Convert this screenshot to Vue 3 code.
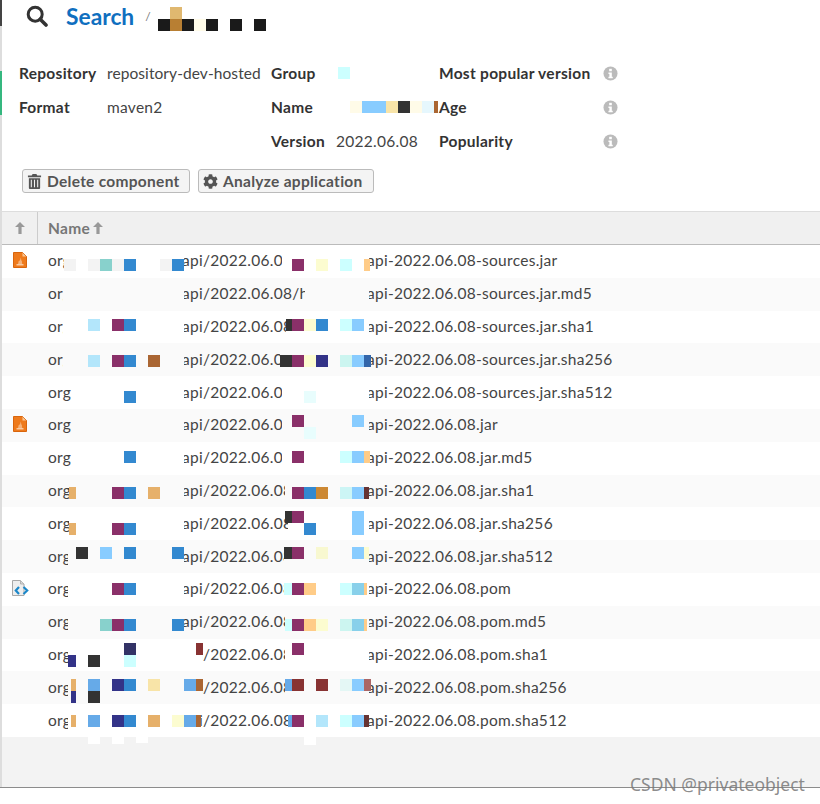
<template>
  <div class="page">
    <div class="main">
      <aside class="strip">
        <i class="strip__dark"></i>
        <i class="strip__gap"></i>
        <i class="strip__green"></i>
      </aside>

      <section class="content">
        <header class="crumbs">
          <svg class="crumbs__icon" viewBox="0 0 22 22">
            <circle cx="9.2" cy="9.2" r="7" fill="none" stroke="#333" stroke-width="3" />
            <path d="M14.2 14.2 20 20" stroke="#333" stroke-width="3.6" stroke-linecap="round" />
          </svg>
          <span class="crumbs__title">Search</span>
          <span class="crumbs__slash">/</span>
          <span class="crumbs__blur">
            <i v-for="(c, i) in titleBlocks" :key="i" :style="{ background: c }"></i>
            <b></b>
          </span>
        </header>

        <div class="info">
          <span class="info__label">Repository</span>
          <span class="info__value info__value--tight">repository-dev-hosted</span>
          <span class="info__label">Group</span>
          <span class="info__value info__value--blur"><i style="background: #ccffff"></i></span>
          <span class="info__label">Most popular version</span>
          <svg class="info__icon" viewBox="0 0 16 16"><circle cx="8" cy="8" r="7.5" fill="#bbb" /><rect x="6.6" y="3" width="2.8" height="2.6" fill="#fff" /><path d="M5.8 7h3.6v4.4h1V13H5.8v-1.6h1V8.6h-1z" fill="#fff" /></svg>

          <span class="info__label">Format</span>
          <span class="info__value">maven2</span>
          <span class="info__label">Name</span>
          <span class="info__value info__value--blur info__value--name">
            <i v-for="(b, i) in nameBlocks" :key="i" :style="{ background: b.c, width: b.w + 'px' }"></i>
          </span>
          <span class="info__label">Age</span>
          <svg class="info__icon" viewBox="0 0 16 16"><circle cx="8" cy="8" r="7.5" fill="#bbb" /><rect x="6.6" y="3" width="2.8" height="2.6" fill="#fff" /><path d="M5.8 7h3.6v4.4h1V13H5.8v-1.6h1V8.6h-1z" fill="#fff" /></svg>

          <span></span>
          <span></span>
          <span class="info__label">Version</span>
          <span class="info__value">2022.06.08</span>
          <span class="info__label">Popularity</span>
          <svg class="info__icon" viewBox="0 0 16 16"><circle cx="8" cy="8" r="7.5" fill="#bbb" /><rect x="6.6" y="3" width="2.8" height="2.6" fill="#fff" /><path d="M5.8 7h3.6v4.4h1V13H5.8v-1.6h1V8.6h-1z" fill="#fff" /></svg>
        </div>

        <div class="actions">
          <button class="btn btn--delete">
            <svg viewBox="0 0 14 16" class="btn__icon">
              <path d="M5 0h4l1 1.6h4v1.8H0V1.6h4zM1 4.4h12V15a1 1 0 0 1-1 1H2a1 1 0 0 1-1-1z" fill="#555" />
              <path d="M3.6 6.2v8M7 6.2v8M10.4 6.2v8" stroke="#f4f4f4" stroke-width="1.1" />
            </svg>
            Delete component
          </button>
          <button class="btn btn--analyze">
            <svg viewBox="0 0 512 512" class="btn__icon">
              <path fill="#555" d="M487.4 315.7l-42.6-24.6c4.3-23.2 4.3-47 0-70.2l42.6-24.6c4.9-2.8 7.1-8.6 5.5-14-11.1-35.6-30-67.8-54.7-94.6-3.8-4.1-10-5.1-14.8-2.3L380.8 110c-17.9-15.4-38.5-27.3-60.8-35.1V25.8c0-5.6-3.9-10.5-9.4-11.7-36.7-8.2-74.3-7.8-109.2 0-5.5 1.2-9.4 6.1-9.4 11.7V75c-22.2 7.9-42.8 19.8-60.8 35.1L88.7 85.5c-4.9-2.8-11-1.9-14.8 2.3-24.7 26.7-43.6 58.9-54.7 94.6-1.7 5.4.6 11.2 5.5 14L67.3 221c-4.3 23.2-4.3 47 0 70.2l-42.6 24.6c-4.9 2.8-7.1 8.6-5.5 14 11.1 35.6 30 67.8 54.7 94.6 3.8 4.1 10 5.1 14.8 2.3l42.6-24.6c17.9 15.4 38.5 27.3 60.8 35.1v49.2c0 5.6 3.9 10.5 9.4 11.7 36.7 8.2 74.3 7.8 109.2 0 5.5-1.2 9.4-6.1 9.4-11.7v-49.2c22.2-7.9 42.8-19.8 60.8-35.1l42.6 24.6c4.9 2.8 11 1.9 14.8-2.3 24.7-26.7 43.6-58.9 54.7-94.6 1.5-5.5-.7-11.3-5.6-14.1zM256 336c-44.1 0-80-35.9-80-80s35.9-80 80-80 80 35.9 80 80-35.9 80-80 80z" />
            </svg>
            Analyze application
          </button>
        </div>

        <div class="thead">
          <div class="thead__sort">
            <svg class="arrow" viewBox="0 0 10 12"><path d="M5 0 10 5H6.6v7H3.4V5H0z" fill="#999" /></svg>
          </div>
          <div class="thead__name">
            Name
            <svg class="arrow" viewBox="0 0 10 12"><path d="M5 0 10 5H6.6v7H3.4V5H0z" fill="#999" /></svg>
          </div>
        </div>

        <div class="tbody">
          <div v-for="(row, i) in rows" :key="row.file" class="row" :class="{ 'row--alt': i % 2 === 1 }">
            <div class="row__icon">
              <svg v-if="row.icon === 'jar'" class="file" viewBox="0 0 14 16">
                <path d="M.5.5h9l4 4v11H.5z" fill="#ee7a1c" stroke="#d9650c" />
                <path d="M9.500.8v3.700h3.700z" fill="#f9c795" />
                <path d="M7.800 5.500 7 8.300 5.600 9.300 5 12.200h4.200L8.900 9.300 8.300 8.300z" fill="#f5b27a" />
                <path d="M3.500 12.200h7v1.200h-7z" fill="#fbdcc0" />
              </svg>
              <svg v-else-if="row.icon === 'pom'" class="file file--pom" viewBox="0 0 17 16">
                <path d="M.5.5h8l3.500 3.500v11.500H.5z" fill="#eee" stroke="#a8a8a8" />
                <path d="M8.500.8V4H12" fill="#d8d8d8" stroke="#a8a8a8" stroke-width=".8" />
                <path d="M7 7 3.800 10.500 7 14M11.500 7l3.700 3.500L11.500 14" fill="none" stroke="#1b87c9" stroke-width="2.200" />
              </svg>
            </div>
            <span class="row__prefix">org</span>
            <span class="row__path">api/2022.06.08/h</span>
            <span class="row__file">{{ row.file }}</span>
          </div>

          <div class="mosaic">
            <i
              v-for="(m, i) in masks"
              :key="'m' + i"
              :style="{ left: m.x + 'px', top: m.y + 'px', width: m.w + 'px', height: m.h + 'px', background: m.c }"
            ></i>
            <i
              v-for="(b, i) in blocks"
              :key="'b' + i"
              :style="{ left: b[0] + 'px', top: b[1] - 245 + 'px', width: (b[3] || 12) + 'px', height: (b[4] || 12) + 'px', background: b[2] }"
            ></i>
          </div>
        </div>

        <div class="tail"></div>
      </section>
    </div>
    <span class="watermark">CSDN @privateobject</span>
  </div>
</template>

<script setup>
const titleBlocks = ['#1a1a1a', '#b87f33', '#1a1a1a', '#fffbe8', '#1a1a1a', '#fff', '#1a1a1a', '#fff', '#1a1a1a']

const nameBlocks = [
  { c: '#fffbe8', w: 12 },
  { c: '#88ccff', w: 24 },
  { c: '#f8e4a8', w: 12 },
  { c: '#333', w: 12 },
  { c: '#fffbe8', w: 12 },
  { c: '#e6f7fd', w: 12 },
  { c: '#aa6633', w: 4 }
]

const names = [
  ['jar', 'api-2022.06.08-sources.jar'],
  ['', 'api-2022.06.08-sources.jar.md5'],
  ['', 'api-2022.06.08-sources.jar.sha1'],
  ['', 'api-2022.06.08-sources.jar.sha256'],
  ['', 'api-2022.06.08-sources.jar.sha512'],
  ['jar', 'api-2022.06.08.jar'],
  ['', 'api-2022.06.08.jar.md5'],
  ['', 'api-2022.06.08.jar.sha1'],
  ['', 'api-2022.06.08.jar.sha256'],
  ['', 'api-2022.06.08.jar.sha512'],
  ['pom', 'api-2022.06.08.pom'],
  ['', 'api-2022.06.08.pom.md5'],
  ['', 'api-2022.06.08.pom.sha1'],
  ['', 'api-2022.06.08.pom.sha256'],
  ['', 'api-2022.06.08.pom.sha512']
]
const rows = names.map(([icon, file]) => ({ icon, file }))

// where the censored stretches of each path start and stop
const ROW_H = 32.8
const maskEdges = [
  [62, 182, 280], [61, 182, 303], [61, 182, 284], [61, 182, 278], [72.5, 182, 280],
  [72.5, 182, 280], [72.5, 182, 280], [67, 182, 283], [67, 182, 286], [66, 182, 282],
  [66, 182, 282], [66, 182, 283], [66, 200, 283], [66, 200, 283], [66, 199, 286]
]
const masks = maskEdges.flatMap(([a, b, c], i) => {
  const bg = i % 2 ? '#fafafa' : '#fff'
  const y = i * ROW_H
  return [
    { x: a, y, w: b - a, h: ROW_H, c: bg },
    { x: c, y, w: 367 - c, h: ROW_H, c: bg }
  ]
})

const PURPLE = '#8a3069'
const BLUE = '#3389d0'
const SKY = '#88ccff'
const ICE = '#ccffff'
const CREAM = '#fcfcd0'
const PEACH = '#ffcc88'
const TAN = '#e6b06a'
const DARK = '#333'
const NAVY = '#333388'
const SOFT = '#66aae8'
const BROWN = '#aa6633'
const RED = '#883333'
const TEAL = '#88d1cc'
const LAKE = '#88d0ea'

const blocks = [
  // x, y on the page, colour, width, height
  [62, 259, '#f3f3f3'], [86, 259, '#f3f3f3'], [110, 259, '#f3f3f3'], [158, 259, '#f3f3f3'],
  [98, 259, TEAL], [122, 259, BLUE], [170, 259, BLUE], [290, 259, PURPLE], [314, 259, CREAM], [338, 259, ICE], [362, 259, PEACH, 6],
  [86, 319, '#b3e6fb'], [110, 319, PURPLE], [122, 319, BLUE], [284, 319, DARK, 6], [290, 319, PURPLE], [302, 319, CREAM], [314, 319, BLUE], [338, 319, ICE], [350, 319, SKY],
  [86, 355, '#b3e6fb'], [110, 355, PURPLE], [122, 355, BLUE], [146, 355, BROWN], [278, 355, DARK], [290, 355, PURPLE], [302, 355, CREAM], [314, 355, NAVY], [338, 355, '#ccf5f0'], [350, 355, SKY], [362, 355, '#3366aa', 7],
  [122, 391, BLUE], [302, 391, '#e8fdfd'],
  [290, 415, PURPLE], [350, 415, SKY], [302, 427, '#e8fdfd'],
  [122, 451, BLUE], [290, 451, PURPLE], [338, 451, ICE], [350, 451, SKY], [362, 451, PEACH, 6],
  [67, 487, TAN, 7], [110, 487, PURPLE], [122, 487, BLUE], [146, 487, TAN], [290, 487, PURPLE], [302, 487, BLUE], [314, 487, '#cc8833'], [338, 487, '#ccf5f5'], [350, 487, SKY], [362, 487, '#663333', 5],
  [67, 523, TAN, 7], [110, 523, PURPLE], [122, 523, BLUE], [283, 511, DARK, 7], [290, 511, PURPLE], [302, 523, BLUE], [350, 511, SKY, 12, 24],
  [74, 547, DARK], [98, 547, SKY], [122, 547, BLUE], [170, 547, BLUE], [282, 547, DARK, 8], [290, 547, PURPLE], [314, 547, '#f8f8d0'], [350, 547, SKY], [362, 547, CREAM, 5],
  [110, 583, PURPLE], [122, 583, BLUE], [282, 583, ICE, 8], [290, 583, PURPLE], [302, 583, PEACH], [338, 583, ICE], [350, 583, LAKE], [362, 583, PEACH, 3],
  [98, 619, TEAL], [110, 619, PURPLE], [122, 619, BLUE], [170, 619, BLUE], [283, 619, ICE, 7], [290, 619, PURPLE], [302, 619, PEACH], [314, 619, CREAM], [338, 619, '#ccf5f0'], [350, 619, LAKE], [362, 619, PEACH, 3],
  [122, 643, '#333366'], [194, 643, RED, 7], [290, 643, PURPLE], [66, 655, NAVY, 8], [86, 655, DARK], [122, 655, ICE],
  [69, 679, TAN, 5], [86, 679, SOFT], [110, 679, NAVY], [122, 679, BLUE], [146, 679, '#f8e4a8'], [182, 679, SOFT], [194, 679, BROWN, 7], [283, 679, SOFT, 7], [290, 679, RED], [314, 679, RED], [338, 679, '#e4f7f5'], [350, 679, SKY], [362, 679, '#aa6666', 7],
  [69, 691, NAVY, 5], [86, 691, DARK],
  [69, 715, TAN, 5], [86, 715, SOFT], [110, 715, NAVY], [122, 715, BLUE], [146, 715, TAN], [170, 715, CREAM], [182, 715, SOFT], [194, 715, BROWN, 5], [286, 715, SOFT, 4], [290, 715, PURPLE], [314, 715, '#b3e6fb'], [338, 715, ICE], [350, 715, SKY], [362, 715, '#663333', 5],
  [86, 737, '#fff', 12, 7], [110, 737, '#fff', 12, 7], [134, 737, '#fff', 12, 6], [302, 737, '#fff', 12, 8]
]
</script>

<style>
body {
  background: #fff;
}
</style>

<style scoped>
.page {
  position: relative;
  height: 804px;
  overflow: hidden;
  background: #fff;
  font-family: Lato, "Open Sans", sans-serif;
  color: #333;
}

.main {
  display: flex;
  height: 787px;
  box-sizing: content-box;
  border-bottom: 1px solid #8c8c8c;
}

.strip {
  display: flex;
  flex-direction: column;
  width: 2px;
  flex: none;
  background: #ddd;
}

.strip i {
  display: block;
}

.strip__dark {
  height: 26px;
  background: #444;
}

.strip__gap {
  height: 45px;
}

.strip__green {
  height: 44px;
  background: #35b77f;
}

.content {
  display: flex;
  flex: 1;
  flex-direction: column;
  min-width: 0;
}

.crumbs {
  display: flex;
  align-items: center;
  height: 32px;
  padding-left: 24px;
}

.crumbs__icon {
  width: 22px;
  height: 22px;
  flex: none;
}

.crumbs__title {
  margin-left: 18px;
  color: #0f6fbf;
  font-size: 22.8px;
  font-weight: 700;
}

.crumbs__slash {
  margin-left: 11px;
  color: #777;
  font-size: 12px;
}

.crumbs__blur {
  position: relative;
  display: flex;
  margin: 7px 0 0 7px;
  padding-top: 12px;
  align-self: flex-start;
}

.crumbs__blur i {
  display: block;
  width: 12px;
  height: 12px;
}

.crumbs__blur b {
  position: absolute;
  left: 12px;
  top: 0;
  width: 12px;
  height: 12px;
  background: #e0b870;
}

.info {
  display: grid;
  grid-template-columns: 88px 164px 65px 103px 164px 15px;
  grid-auto-rows: 34px;
  align-items: center;
  margin-top: 24px;
  padding-left: 17px;
  font-size: 15.5px;
  letter-spacing: 0.28px;
}

.info__label {
  font-weight: 700;
  color: #333;
  white-space: nowrap;
}

.info__value {
  color: #444;
  white-space: nowrap;
}

.info__value--tight {
  letter-spacing: 0.08px;
}

.info__value--blur {
  display: flex;
  height: 12px;
  padding-left: 2px;
}

.info__value--name {
  padding-left: 14px;
}

.info__value--blur i {
  display: block;
  width: 12px;
  height: 12px;
  flex: none;
}

.info__icon {
  width: 15px;
  height: 15px;
}

.actions {
  display: flex;
  gap: 8px;
  margin-top: 11px;
  padding-left: 20px;
}

.btn {
  display: flex;
  align-items: center;
  height: 24px;
  padding: 0 0 0 4px;
  background: #f4f4f4;
  border: 1px solid #bbb;
  border-radius: 3px;
  color: #555;
  font-family: inherit;
  font-size: 15.5px;
  font-weight: 700;
  letter-spacing: 0.28px;
  white-space: nowrap;
}

.btn--delete {
  width: 168px;
}

.btn--analyze {
  width: 176px;
}

.btn__icon {
  width: 15px;
  height: 15px;
  margin-right: 5px;
  flex: none;
}

.thead {
  display: flex;
  height: 34px;
  box-sizing: border-box;
  margin-top: 18px;
  background: #f0f0f0;
  border-top: 1px solid #ddd;
  border-bottom: 1px solid #bbb;
}

.thead__sort {
  display: flex;
  align-items: center;
  justify-content: center;
  width: 35px;
  border-right: 1px solid #ccc;
}

.thead__name {
  display: flex;
  align-items: center;
  gap: 3px;
  padding-left: 10px;
  color: #777;
  font-size: 15.5px;
  font-weight: 700;
  letter-spacing: 0.28px;
}

.arrow {
  width: 10px;
  height: 12px;
}

.tbody {
  position: relative;
}

.row {
  display: flex;
  align-items: center;
  height: 32.8px;
  padding-bottom: 2px;
  box-sizing: border-box;
  color: #444;
  font-size: 15.5px;
  letter-spacing: 0.28px;
  white-space: nowrap;
}

.row--alt {
  background: #fafafa;
}

.row__icon {
  display: flex;
  width: 46px;
  flex: none;
  padding-left: 11px;
  box-sizing: border-box;
}

.file {
  width: 14px;
  height: 16px;
}

.file--pom {
  width: 17px;
  margin-left: -1px;
}

.row__prefix {
  width: 134px;
  flex: none;
}

.row__path {
  width: 185px;
  flex: none;
}

.mosaic {
  position: absolute;
  inset: 0;
  pointer-events: none;
}

.mosaic i {
  position: absolute;
  display: block;
}

.tail {
  flex: 1;
  background: #f3f3f3;
}

.watermark {
  position: absolute;
  left: 630px;
  top: 772px;
  color: rgba(120, 120, 120, 0.85);
  font-family: "Noto Sans", sans-serif;
  font-size: 17.5px;
}
</style>
